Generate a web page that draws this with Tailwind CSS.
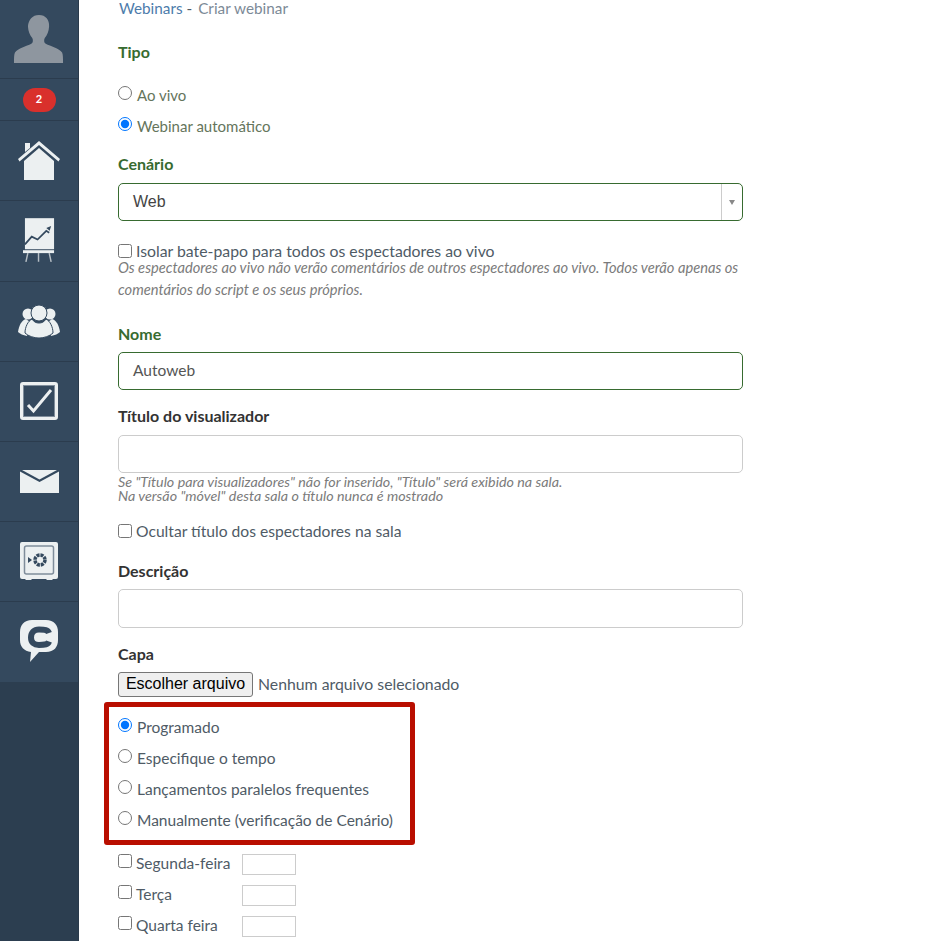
<!DOCTYPE html>
<html lang="pt">
<head>
    <meta charset="UTF-8">
    <title>Criar webinar</title>
    <script src="https://cdn.jsdelivr.net/npm/@tailwindcss/browser@4"></script>
</head>
<body class="bg-white h-[941px] overflow-hidden font-['Lato',sans-serif] text-[15.5px] text-[#4f5b66]">
<div class="flex h-[941px]">
    <!-- sidebar -->
    <aside class="w-[79px] h-full shrink-0 bg-[#2c3e50] border-r border-[#2a3a4b]">
        <div class="h-[79px] flex items-center justify-center bg-[#34495e] border-b border-[#2b3c4e]">
            <svg width="52" height="50" viewBox="0 0 54 52" fill="#8e969f"><path d="M27 1c7 0 11 5 10.500 12-.3 5-2 9-4.500 12-1 2-1 5 1 6 5 2.500 14 5 17 9 1 2 1 6 1 11H1c0-5 0-9 1-11 3-4 12-6.500 17-9 2-1 2-4 1-6-2.500-3-4.200-7-4.500-12C16 6 20 1 27 1z"/></svg>
        </div>
        <div class="h-[42px] flex items-center justify-center bg-[#34495e] border-b border-[#2b3c4e]">
            <span class="w-[33px] h-[24px] rounded-full bg-[#d9302c] text-white text-[11px] font-bold flex items-center justify-center">2</span>
        </div>
        <div class="h-[80px] flex items-center justify-center bg-[#34495e] border-b border-[#2b3c4e]">
            <svg width="42" height="40" viewBox="0 0 42 40" fill="#ecf0f1"><path d="M7 2h5v5L7 11z"/><path d="M21 0 42 18l-1.500 2.500L21 4 1.500 20.500 0 18z"/><path d="M21 7 36 20v19H6V20z"/></svg>
        </div>
        <div class="h-[81px] flex items-center justify-center bg-[#34495e] border-b border-[#2b3c4e]">
            <svg width="33" height="45" viewBox="0 0 34 46" class="-mt-[1px]"><path fill="#ecf0f1" d="M2 0h30v32H2z"/><path fill="none" stroke="#34495e" stroke-width="1.800" d="M2 27 9 19l6 3 9-9 3 2"/><path fill="#34495e" d="m24 10 5-2-1.500 5z"/><path fill="#ecf0f1" d="M0 33h32v3H0z"/><path fill="none" stroke="#b6bec5" stroke-width="1.500" d="M5 36 3 45M16 36v9M27 36l2 9"/></svg>
        </div>
        <div class="h-[80px] flex items-center justify-center bg-[#34495e] border-b border-[#2b3c4e]">
            <svg width="42" height="34" viewBox="0 0 42 34" fill="#ecf0f1" class="-mt-[2px]"><circle cx="10" cy="10" r="5.500"/><circle cx="32" cy="10" r="5.500"/><path d="M8 15c-4 1-7 6-8 13 2 2 5 3 9 4l3-14z"/><path d="M34 15c4 1 7 6 8 13-2 2-5 3-9 4l-3-14z"/><circle cx="21" cy="9" r="8" stroke="#34495e" stroke-width="1"/><path d="M14 15c-4 2-7 8-7 14 3 3 9 5 14 5s11-2 14-5c0-6-3-12-7-14-2 3-4 4-7 4s-5-1-7-4z" stroke="#34495e" stroke-width="1"/></svg>
        </div>
        <div class="h-[80px] flex items-center justify-center bg-[#34495e] border-b border-[#2b3c4e]">
            <svg width="38" height="38" viewBox="0 0 38 38" class="-mt-[2px]"><rect x="1.500" y="1.500" width="35" height="35" rx="1.500" fill="none" stroke="#ecf0f1" stroke-width="3"/><rect x="3.500" y="3.500" width="31" height="31" fill="none" stroke="#7f8d9b" stroke-width="1"/><path fill="none" stroke="#ecf0f1" stroke-width="3" d="m8 23 5.500 6L31 8"/></svg>
        </div>
        <div class="h-[80px] flex items-center justify-center bg-[#34495e] border-b border-[#2b3c4e]">
            <svg width="39" height="23" viewBox="0 0 39 23" fill="#ecf0f1"><path d="M0 1.500 19.500 12 39 1.500V23H0z"/><path d="M2 0h35L19.500 9.500z"/></svg>
        </div>
        <div class="h-[80px] flex items-center justify-center bg-[#34495e] border-b border-[#2b3c4e]">
            <svg width="38" height="38" viewBox="0 0 38 38" class="-mt-[2px]"><path fill="#ecf0f1" d="M2 0h34a2 2 0 0 1 2 2v33a2 2 0 0 1-2 2h-3l-1 1h-5l-1-1H12l-1 1H6l-1-1H2a2 2 0 0 1-2-2V2a2 2 0 0 1 2-2z"/><rect x="4.500" y="4" width="29" height="28" rx="2" fill="none" stroke="#7f8d9b" stroke-width="1.500"/><circle cx="20" cy="18" r="5" fill="none" stroke="#34495e" stroke-width="3.500" stroke-dasharray="3 .9"/><path fill="#34495e" d="m8 15 4 3-4 3z"/></svg>
        </div>
        <div class="h-[80px] flex items-center justify-center bg-[#34495e]">
            <svg width="38" height="43" viewBox="0 0 38 43" class="-mt-[2px]"><path fill="#ecf0f1" d="M12 0h14c8 0 12 5 12 12v8c0 7-4 12-12 12H19l-9 10 1-10C4 31 0 27 0 20v-8C0 5 4 0 12 0z"/><path fill="none" stroke="#34495e" stroke-width="6" d="M29 13c-1-3-4-3.500-10-3.500-5 0-8 3-8 8s3 7.500 8 7.500c6 0 9-.5 10-3.500"/></svg>
        </div>
    </aside>

    <!-- form -->
    <main class="pl-[39px] w-[664px] shrink-0">
        <div class="h-[17px] leading-[17px] text-[15.3px] text-[#7c8a97] pl-[1px]"><a class="text-[#4d7cab]">Webinars</a> <span class="text-[#4f5b66]">-</span><span class="ml-[6px]">Criar webinar</span></div>

        <h3 class="mt-[25px] h-[20px] leading-[20px] text-[16px] font-bold text-[#376b30]">Tipo</h3>
        <label class="mt-[23px] h-[20px] flex items-center text-[15px] text-[#65755c]"><input type="radio" name="tipo" class="w-[14px] h-[14px] mr-[5px] -mt-[4px]"><span>Ao vivo</span></label>
        <label class="mt-[11px] h-[20px] flex items-center text-[15px] text-[#65755c]"><input type="radio" name="tipo" checked class="w-[14px] h-[14px] mr-[5px] -mt-[4px]"><span>Webinar automático</span></label>

        <h3 class="mt-[18px] h-[20px] leading-[20px] text-[16px] font-bold text-[#376b30]">Cenário</h3>
        <div class="mt-[9px] h-[38px] rounded-[5px] border border-[#376b30] flex items-center bg-white">
            <span class="flex-1 pl-[14px] font-['Liberation_Sans',sans-serif] text-[16px] text-[#444]">Web</span>
            <span class="w-[21px] h-full border-l border-[#ccc] flex items-center justify-center"><span class="w-0 h-0 border-x-[3.500px] border-x-transparent border-t-[5px] border-t-[#888]"></span></span>
        </div>

        <label class="mt-[21px] h-[20px] flex items-center text-[15.8px]"><input type="checkbox" class="w-[14px] h-[14px] mr-[4px] -mt-[2px]"><span class="-mt-[2px]">Isolar bate-papo para todos os espectadores ao vivo</span></label>
        <p class="w-[625px] text-[14.68px] leading-[22px] italic text-[#7b7b7b] -mt-[5px]">Os espectadores ao vivo não verão comentários de outros espectadores ao vivo. Todos verão apenas os comentários do script e os seus próprios.</p>

        <h3 class="mt-[23px] h-[20px] leading-[20px] text-[16px] font-bold text-[#376b30]">Nome</h3>
        <div class="mt-[8px] h-[38px] rounded-[5px] border border-[#376b30] flex items-center pl-[14px] text-[#555]">Autoweb</div>

        <h3 class="mt-[16px] h-[20px] leading-[20px] text-[16px] font-bold text-[#333]">Título do visualizador</h3>
        <div class="mt-[9px] h-[38px] rounded-[5px] border border-[#ccc]"></div>
        <p class="mt-[2px] text-[14.3px] leading-[13.5px] italic text-[#7b7b7b]">Se "Título para visualizadores" não for inserido, "Título" será exibido na sala.<br>Na versão "móvel" desta sala o título nunca é mostrado</p>

        <label class="mt-[20px] h-[20px] flex items-center text-[15.65px]"><input type="checkbox" class="w-[14px] h-[14px] mr-[4px] -mt-[2px]"><span>Ocultar título dos espectadores na sala</span></label>

        <h3 class="mt-[19px] h-[20px] leading-[20px] text-[16px] font-bold text-[#333]">Descrição</h3>
        <div class="mt-[8px] h-[39px] rounded-[5px] border border-[#ccc]"></div>

        <h3 class="mt-[16px] h-[20px] leading-[20px] text-[16px] font-bold text-[#333]">Capa</h3>
        <div class="mt-[7px] flex items-center h-[26px]">
            <button class="w-[135px] h-[25px] rounded-[3px] border border-[#767676] bg-[#efefef] text-black font-['Liberation_Sans',sans-serif] text-[16px] leading-none">Escolher arquivo</button>
            <span class="ml-[5px] text-[15.8px]">Nenhum arquivo selecionado</span>
        </div>

        <div class="-ml-[14px] mt-[5px] w-[311px] h-[143px] border-[5px] border-[#b90e00] rounded-[3px] pl-[9px] pt-[10px]">
            <label class="h-[20px] flex items-center"><input type="radio" name="modo" checked class="w-[14px] h-[14px] mr-[5px] -mt-[4px]"><span class="pt-[2px]">Programado</span></label>
            <label class="mt-[11px] h-[20px] flex items-center"><input type="radio" name="modo" class="w-[14px] h-[14px] mr-[5px] -mt-[4px]"><span class="pt-[2px]">Especifique o tempo</span></label>
            <label class="mt-[11px] h-[20px] flex items-center"><input type="radio" name="modo" class="w-[14px] h-[14px] mr-[5px] -mt-[4px]"><span class="pt-[2px]">Lançamentos paralelos frequentes</span></label>
            <label class="mt-[11px] h-[20px] flex items-center"><input type="radio" name="modo" class="w-[14px] h-[14px] mr-[5px] -mt-[4px]"><span class="pt-[2px]">Manualmente (verificação de Cenário)</span></label>
        </div>

        <div class="mt-[9px] flex items-center h-[21px]"><label class="w-[124px] -mt-[2px] flex items-center"><input type="checkbox" class="w-[14px] h-[14px] mr-[4px] -mt-[6px]"><span>Segunda-feira</span></label><span class="w-[54px] h-[21px] border border-[#ccc]"></span></div>
        <div class="mt-[10px] flex items-center h-[21px]"><label class="w-[124px] -mt-[2px] flex items-center"><input type="checkbox" class="w-[14px] h-[14px] mr-[4px] -mt-[6px]"><span>Terça</span></label><span class="w-[54px] h-[21px] border border-[#ccc]"></span></div>
        <div class="mt-[10px] flex items-center h-[21px]"><label class="w-[124px] -mt-[2px] flex items-center"><input type="checkbox" class="w-[14px] h-[14px] mr-[4px] -mt-[6px]"><span>Quarta feira</span></label><span class="w-[54px] h-[21px] border border-[#ccc]"></span></div>
    </main>
</div>
</body>
</html>
